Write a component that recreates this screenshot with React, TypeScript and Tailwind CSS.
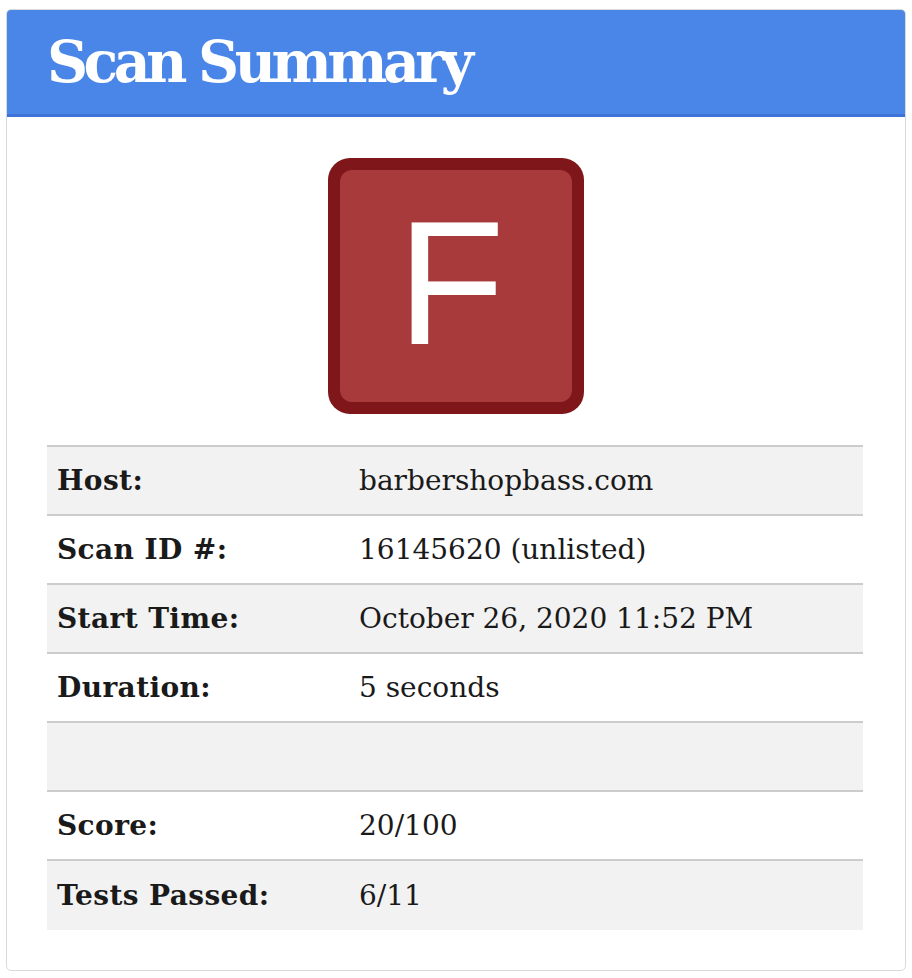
const rows: { label: string; value: string }[] = [
  { label: "Host:", value: "barbershopbass.com" },
  { label: "Scan ID #:", value: "16145620 (unlisted)" },
  { label: "Start Time:", value: "October 26, 2020 11:52 PM" },
  { label: "Duration:", value: "5 seconds" },
  { label: "", value: "" },
  { label: "Score:", value: "20/100" },
  { label: "Tests Passed:", value: "6/11" },
];

export default function App() {
  return (
    <div className="min-h-screen bg-white pt-[9px] pl-[6px] pr-[6px]">
      <div className="w-[900px] overflow-hidden rounded-[5px] border border-[#d9d9d9] bg-white pb-[40px]">
        <div className="h-[107px] border-b-[3px] border-[#3d73d6] bg-[#4a86e8] pl-[40px] pt-[22px]">
          <h1 className="text-[57px] leading-[60px] font-bold tracking-[-4.6px] text-white [font-family:'DejaVu_Serif',serif]">
            Scan Summary
          </h1>
        </div>

        <div className="mt-[41px] flex justify-center">
          <div className="flex h-[256px] w-[256px] items-center justify-center rounded-[22px] bg-[#7f1619] p-[12px]">
            <div className="flex h-full w-full items-center justify-center rounded-[12px] bg-[#a83a3c] pr-[10px] pb-[6px]">
              <span className="text-[176px] leading-none text-white [font-family:'Liberation_Sans',Arial,sans-serif]">
                F
              </span>
            </div>
          </div>
        </div>

        <div className="ml-[40px] mr-[42px] mt-[31px] border-t-2 border-[#cccccc] [font-family:'DejaVu_Serif',Georgia,serif] text-[#1a1a1a]">
          {rows.map((row, i) => (
            <div
              key={i}
              className={`flex h-[69px] items-center ${i < rows.length - 1 ? "border-b-2 border-[#cccccc]" : ""} ${i % 2 === 0 ? "bg-[#f2f2f2]" : "bg-white"}`}
            >
              <div className="w-[312px] pl-[10px] text-[28px] font-bold tracking-[0.4px]">{row.label}</div>
              <div className="text-[28px]">{row.value}</div>
            </div>
          ))}
        </div>
      </div>
    </div>
  );
}
